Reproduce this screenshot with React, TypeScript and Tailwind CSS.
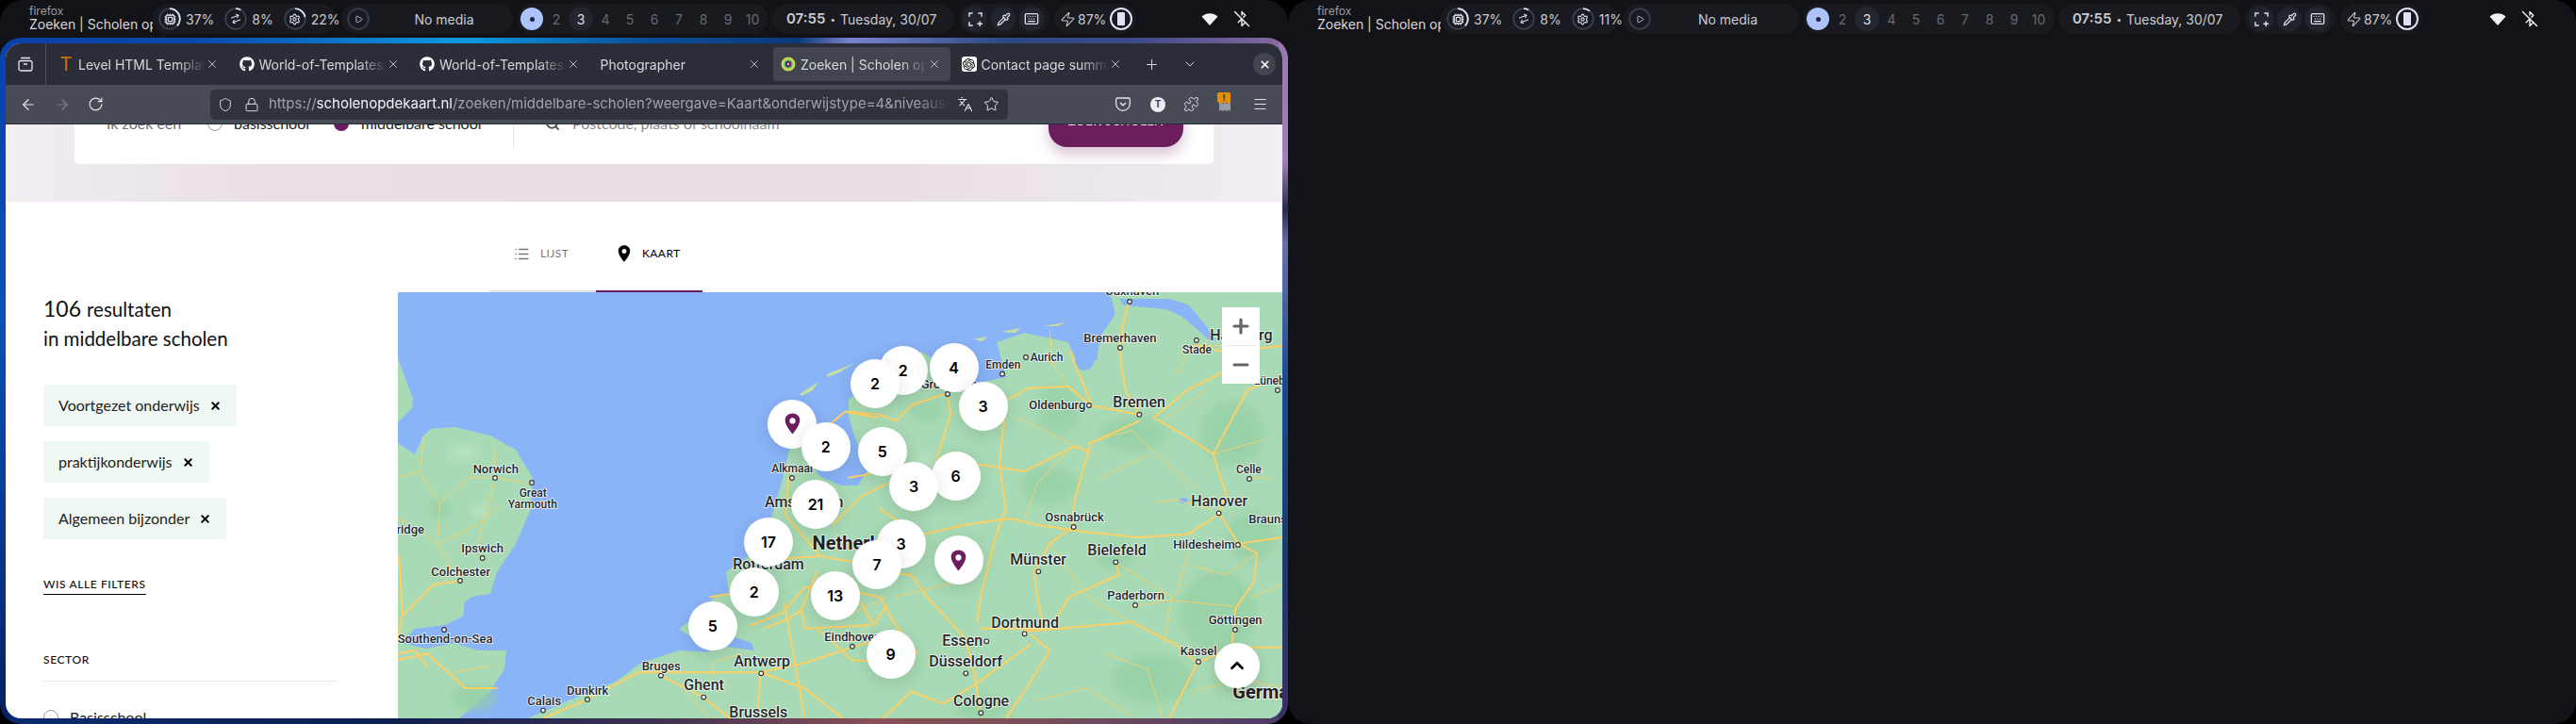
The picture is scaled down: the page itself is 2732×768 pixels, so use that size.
import type { ReactNode } from "react";
import {
  ArrowLeft,
  ArrowRight,
  ArrowRightLeft,
  BluetoothOff,
  ChevronDown,
  ChevronUp,
  Cpu,
  Keyboard,
  Languages,
  List,
  Lock,
  Menu,
  Minus,
  Pipette,
  Play,
  Plus,
  Puzzle,
  RotateCw,
  Search,
  Settings,
  Shield,
  Star,
  X,
  Zap,
} from "lucide-react";
import { FaGithub } from "react-icons/fa";
import { IoLocationSharp } from "react-icons/io5";
import { SiOpenai } from "react-icons/si";

const Ring = ({ pct, children }: { pct: number; children: ReactNode }) => {
  return (
    <div className="relative flex h-6 w-6 items-center justify-center text-[#dfe3f0]">
      <svg viewBox="0 0 24 24" className="absolute inset-0 -rotate-90">
        <circle cx="12" cy="12" r="10.8" fill="none" stroke="#3a3f4e" strokeWidth="1.8" />
        <circle
          cx="12"
          cy="12"
          r="10.8"
          fill="none"
          stroke="#dfe3f0"
          strokeWidth="1.8"
          pathLength={100}
          strokeDasharray={`${pct} 100`}
        />
      </svg>
      {children}
    </div>
  );
};

const TopBar = ({
  gpu,
  statsWidth,
  mediaWidth,
}: {
  gpu: number;
  statsWidth: string;
  mediaWidth: string;
}) => {
  return (
    <div className="flex h-10 shrink-0 items-center font-['Inter',sans-serif] text-[14px] text-[#c9cbd1]">
      <div className="w-[162px] shrink-0 overflow-hidden whitespace-nowrap pl-[31px]">
        <div className="text-[12px] leading-[12px] text-[#9a9ca3]">firefox</div>
        <div className="text-[14px] leading-[16px] text-[#d9d9dd]">Zoeken | Scholen op de kaart</div>
      </div>

      <div className={`flex h-8 items-center gap-[11px] rounded-2xl bg-[#181a20] pl-[6px] ${statsWidth}`}>
        <div className="flex items-center gap-[5px]">
          <Ring pct={37}>
            <Cpu size={13} strokeWidth={2.4} />
          </Ring>
          <span>37%</span>
        </div>
        <div className="flex items-center gap-[5px]">
          <Ring pct={8}>
            <ArrowRightLeft size={12} className="-rotate-[20deg]" />
          </Ring>
          <span>8%</span>
        </div>
        <div className="flex items-center gap-[5px]">
          <Ring pct={gpu}>
            <Settings size={13} />
          </Ring>
          <span>{gpu}%</span>
        </div>
      </div>

      <div className={`ml-[5px] flex h-8 items-center rounded-2xl bg-[#181a20] pl-[6px] ${mediaWidth}`}>
        <Ring pct={0}>
          <Play size={9} />
        </Ring>
        <span className="flex-1 pl-[6px] text-center">No media</span>
      </div>

      <div className="ml-[5px] flex h-8 w-[266px] items-center rounded-2xl bg-[#181a20] pl-[2px] text-[#666970]">
        <div className="flex h-[26px] w-[26px] items-center justify-center">
          <div className="flex h-[24px] w-[24px] items-center justify-center rounded-full bg-[#adc3fb]">
            <div className="h-[5px] w-[5px] rounded-full bg-[#1c2440]" />
          </div>
        </div>
        <div className="flex h-[26px] w-[26px] items-center justify-center">2</div>
        <div className="flex h-[26px] w-[26px] items-center justify-center rounded-full bg-[#24262d] text-[#dcdee3]">
          3
        </div>
        {[4, 5, 6, 7, 8, 9, 10].map((n) => (
          <div key={n} className="flex h-[26px] w-[26px] items-center justify-center">
            {n}
          </div>
        ))}
      </div>

      <div className="ml-[4px] flex h-8 w-[193px] items-center gap-[5px] rounded-2xl bg-[#181a20] pl-[15px]">
        <span className="text-[15px] font-semibold">07:55</span>
        <span className="text-[10px]">•</span>
        <span>Tuesday, 30/07</span>
      </div>

      <div className="ml-[5px] flex h-8 w-[96px] items-center gap-[4px] rounded-2xl bg-[#181a20] pl-[4px]">
        <div className="flex h-[26px] w-[26px] items-center justify-center rounded-full bg-[#22242b]">
          <svg width="15" height="15" viewBox="0 0 16 16" fill="none" stroke="#dfe1e6" strokeWidth="1.5">
            <path d="M1 5V1h4M11 1h4v4M1 11v4h4M13 10v6M10 13h6" />
          </svg>
        </div>
        <div className="flex h-[26px] w-[26px] items-center justify-center rounded-full bg-[#22242b]">
          <Pipette size={15} className="text-[#dfe1e6]" />
        </div>
        <div className="flex h-[26px] w-[26px] items-center justify-center rounded-full bg-[#22242b]">
          <Keyboard size={16} className="text-[#dfe1e6]" />
        </div>
      </div>

      <div className="ml-[5px] flex h-8 w-[87px] items-center rounded-2xl bg-[#181a20] pl-[6px]">
        <Zap size={17} strokeWidth={1.5} />
        <span className="ml-[2px]">87%</span>
        <div className="relative ml-[4px] flex h-6 w-6 items-center justify-center rounded-full border-2 border-[#dfe3f5]">
          <div className="h-[14px] w-[8px] rounded-[1px] bg-[#dfe3f5]" />
        </div>
      </div>

      <div className="ml-auto flex items-center gap-[16px] pr-[40px] text-[#e8e8ee]">
        <svg width="18" height="14" viewBox="0 0 18 14">
          <path d="M9 14 0.5 4.5C5 0 13 0 17.5 4.5Z" fill="#f0f0f4" />
        </svg>
        <BluetoothOff size={18} />
      </div>
    </div>
  );
};

const tabs: { icon?: ReactNode; title: string; active?: boolean }[] = [
  {
    icon: <span className="text-[20px] font-normal leading-none text-[#d2690a]">T</span>,
    title: "Level HTML Template",
  },
  { icon: <FaGithub size={16} className="text-white" />, title: "World-of-Templates/level" },
  { icon: <FaGithub size={16} className="text-white" />, title: "World-of-Templates/level" },
  { title: "Photographer" },
  {
    icon: (
      <svg width="16" height="16" viewBox="0 0 16 16">
        <circle cx="8" cy="8" r="7.5" fill="#c9d84c" />
        <circle cx="8" cy="8" r="4.5" fill="#3aa58a" />
        <circle cx="8" cy="8" r="3" fill="#6b1d5e" />
        <circle cx="8" cy="8" r="1" fill="#ffffff" />
      </svg>
    ),
    title: "Zoeken | Scholen op de kaart",
    active: true,
  },
  {
    icon: (
      <div className="flex h-4 w-4 items-center justify-center rounded-[3px] bg-white">
        <SiOpenai size={13} className="text-black" />
      </div>
    ),
    title: "Contact page summary",
  },
];

const TabStrip = () => {
  return (
    <div className="flex h-[44px] shrink-0 items-center bg-[#2b2e38] font-['Inter',sans-serif] text-[14px] text-[#d6d8de]">
      <div className="flex h-full w-[43px] items-center justify-center border-r border-[#4a4d57]">
        <svg width="16" height="16" viewBox="0 0 16 16" fill="none" stroke="#e4e6f0" strokeWidth="1.3">
          <path d="M3 1.5h10" />
          <rect x="1" y="4.5" width="14" height="10.5" rx="2" />
          <path d="M6 8h4" />
        </svg>
      </div>
      <div className="ml-[5px] flex gap-[3.5px]">
        {tabs.map((t, i) => (
          <div
            key={i}
            className={`flex h-9 w-[188px] items-center rounded-[4px] pl-[8px] pr-[10px] ${t.active ? "bg-[#42454f]" : ""}`}
          >
            {t.icon && <div className="mr-[5px] flex w-4 shrink-0 justify-center">{t.icon}</div>}
            <div className="min-w-0 flex-1 overflow-hidden whitespace-nowrap [mask-image:linear-gradient(90deg,#000_78%,transparent_100%)]">
              {t.title}
            </div>
            <X size={14} strokeWidth={1.4} className="shrink-0" />
          </div>
        ))}
      </div>
      <Plus size={17} strokeWidth={1.5} className="ml-[13px]" />
      <ChevronDown size={16} strokeWidth={1.5} className="ml-[24px]" />
      <div className="ml-auto mr-[7px] flex h-6 w-6 items-center justify-center rounded-full bg-[#42454f]">
        <X size={13} strokeWidth={3} className="text-white" />
      </div>
    </div>
  );
};

const NavBar = () => {
  return (
    <div className="flex h-[42px] shrink-0 items-center border-b border-[#2b2d36] bg-[#474b55] font-['Inter',sans-serif] text-[#e4e6ec]">
      <ArrowLeft size={18} strokeWidth={1.6} className="ml-[15px]" />
      <ArrowRight size={18} strokeWidth={1.6} className="ml-[18px] text-[#7d808a]" />
      <RotateCw size={17} strokeWidth={1.6} className="ml-[18px]" />

      <div className="ml-[113px] flex h-8 w-[846px] items-center rounded-[5px] bg-[#30333c] pl-[8px] pr-[8px]">
        <Shield size={16} strokeWidth={1.4} />
        <Lock size={16} strokeWidth={1.4} className="ml-[12px]" />
        <div className="ml-[10px] w-[722px] overflow-hidden whitespace-nowrap text-[15px] text-[#a0a2aa] [mask-image:linear-gradient(90deg,#000_95%,transparent_100%)]">
          https://<span className="text-[#f2f2f5]">scholenopdekaart.nl</span>
          /zoeken/middelbare-scholen?weergave=Kaart&onderwijstype=4&niveaus=praktijkonderwijs
        </div>
        <Languages size={17} strokeWidth={1.5} className="ml-[8px]" />
        <Star size={17} strokeWidth={1.4} className="ml-[11px]" />
      </div>

      <svg width="16" height="15" viewBox="0 0 16 15" fill="none" stroke="#e4e6ec" strokeWidth="1.3" className="ml-[114px]">
        <path d="M2 1h12a1.3 1.3 0 0 1 1.3 1.3V7a7.3 7.3 0 0 1-14.6 0V2.300A1.300 1.300 0 0 1 2 1Z" />
        <path d="m5 6 3 2.800L11 6" strokeWidth="1.5" />
      </svg>
      <div className="ml-[21px] flex h-4 w-4 items-center justify-center rounded-full bg-[#eceef2] text-[10px] font-bold text-[#3b3e48]">
        T
      </div>
      <Puzzle size={17} strokeWidth={1.4} className="ml-[19px]" />
      <div className="relative ml-[19px] h-4 w-4">
        <svg width="14" height="16" viewBox="0 0 14 16" className="ml-[1px]">
          <path d="M7 0a6 6 0 0 1 6 6v9l-2-1.500L9 15l-2-1.500L5 15l-2-1.500L1 15V6a6 6 0 0 1 6-6Z" fill="#9a9ca2" />
          <circle cx="5" cy="6" r="1" fill="#474b55" />
          <circle cx="9" cy="6" r="1" fill="#474b55" />
        </svg>
        <div className="absolute -top-[5px] left-0 flex h-[11px] w-[14px] items-center justify-center rounded-[2px] bg-[#e58e00] text-[9px] font-bold leading-none text-[#2b2d36]">
          !
        </div>
      </div>
      <Menu size={17} strokeWidth={1.4} className="ml-[21px]" />
    </div>
  );
};

const SearchStrip = () => {
  return (
    <div className="flex h-[82px] shrink-0 flex-col justify-end overflow-hidden bg-[linear-gradient(90deg,#f2eef2_0%,#eadfe8_20%,#e9dee7_70%,#f2eef3_100%)] pb-[40px] pl-[73px] pr-[73px]">
      <div className="flex h-[110px] shrink-0 items-end rounded-[5px] bg-white pb-[16px] pl-[34px] pr-[32px] font-['Lato',sans-serif] text-[16px]">
        <div className="flex h-[54px] w-full items-center">
          <span className="w-[107px] text-[#6f6f6f]">Ik zoek een</span>
          <span className="h-4 w-4 rounded-full border border-[#999]" />
          <span className="ml-[12px] w-[106px] text-[#222]">basisschool</span>
          <span className="h-4 w-4 rounded-full bg-[#6b1d5e]" />
          <span className="ml-[13px] w-[161px] text-[#222]">middelbare school</span>
          <span className="h-full w-px bg-[#eee4ea]" />
          <Search size={16} strokeWidth={3} className="ml-[33px] text-[#555]" />
          <span className="ml-[13px] text-[#8a8a8a]">Postcode, plaats of schoolnaam</span>
          <button className="ml-auto -mt-[4px] flex h-[54px] w-[143px] items-center justify-center rounded-[20px] bg-[#6b1d5e] text-[13px] font-medium tracking-wide text-white shadow-[0_8px_14px_rgba(107,29,94,0.25)]">
            ZOEK SCHOLEN
          </button>
        </div>
      </div>
    </div>
  );
};

const Chip = ({ label }: { label: string }) => {
  return (
    <div className="flex h-11 w-fit items-center gap-[10px] rounded-[4px] bg-[#eff8f3] pl-[16px] pr-[16px] text-[16px] text-[#222]">
      <span>{label}</span>
      <X size={13} strokeWidth={3.5} className="text-black" />
    </div>
  );
};

const Sidebar = () => {
  return (
    <div className="w-[416px] shrink-0 pl-[40px] font-['Lato',sans-serif] text-[#111]">
      <div className="flex h-8 items-baseline gap-[6px] text-[20.5px]">
        <span className="text-[23px]">106</span>
        <span>resultaten</span>
      </div>
      <div className="mt-[1px] h-8 text-[20.5px] leading-8">in middelbare scholen</div>
      <div className="mt-[33px] flex flex-col gap-4">
        <Chip label="Voortgezet onderwijs" />
        <Chip label="praktijkonderwijs" />
        <Chip label="Algemeen bijzonder" />
      </div>
      <div className="mt-[40px] w-fit border-b border-black pb-[2px] text-[12px] font-medium leading-[16px] tracking-[0.6px]">
        WIS ALLE FILTERS
      </div>
      <div className="mt-[61px] w-[312px] border-b border-[#eee6ea] pb-[14px] text-[12px] font-medium leading-[16px] tracking-[0.6px]">
        SECTOR
      </div>
      <div className="mt-[26px] flex items-center gap-[12px] text-[16px] text-[#222]">
        <span className="h-4 w-4 rounded-full border border-[#999]" />
        <span>Basisschool</span>
      </div>
    </div>
  );
};

// map labels: x, y (baseline), name, size
const labelsWest: [number, number, string, number][] = [
  [245, 605, "Norwich", 13],
  [392, 680, "Great", 12],
  [356, 716, "Yarmouth", 12],
  [208, 858, "Ipswich", 13],
  [112, 932, "Colchester", 13],
  [5, 1147, "Southend-on-Sea", 13],
  [418, 1343, "Calais", 13],
  [543, 1310, "Dunkirk", 13],
  [782, 1232, "Bruges", 13],
  [916, 1297, "Ghent", 16],
  [1075, 1222, "Antwerp", 16],
  [1060, 1382, "Brussels", 16],
  [1363, 1140, "Eindhoven", 13],
  [1072, 912, "Rotterdam", 16],
  [1195, 603, "Alkmaar", 12],
  [1173, 713, "Amsterdam", 16],
];

const labelsEast: [number, number, string, number][] = [
  [817, 40, "Cuxhaven", 13],
  [748, 190, "Bremerhaven", 13],
  [1150, 182, "Hamburg", 16],
  [1062, 224, "Stade", 12],
  [436, 273, "Emden", 12],
  [578, 249, "Aurich", 12],
  [574, 403, "Oldenburg", 13],
  [841, 397, "Bremen", 16],
  [1290, 323, "Lüneburg", 12],
  [230, 335, "Groningen", 13],
  [1233, 605, "Celle", 12],
  [1090, 712, "Hanover", 16],
  [1273, 765, "Braunschweig", 13],
  [625, 760, "Osnabrück", 13],
  [760, 868, "Bielefeld", 16],
  [1033, 847, "Hildesheim", 13],
  [514, 898, "Münster", 16],
  [823, 1008, "Paderborn", 13],
  [454, 1097, "Dortmund", 16],
  [298, 1155, "Essen", 16],
  [256, 1220, "Düsseldorf", 16],
  [333, 1348, "Cologne", 16],
  [1145, 1087, "Göttingen", 13],
  [1055, 1185, "Kassel", 13],
];

const dotsWest = [
  [315, 621], [432, 636], [275, 876], [204, 948], [153, 1104], [468, 1361],
  [609, 1326], [843, 1250], [979, 1319], [1162, 1243], [1260, 621], [1452, 1157],
];

const dotsEast = [
  [894, 60], [864, 207], [1107, 183], [564, 237], [489, 290], [315, 354], [765, 390],
  [925, 419], [1365, 342], [1275, 624], [1178, 733], [716, 777], [850, 889], [1239, 834],
  [604, 919], [912, 1026], [560, 1117], [439, 1141], [373, 1243], [421, 1369], [1230, 1104], [1113, 1206],
];

const roadsWest = [
  "M6 1130 20 1060 120 960 204 948",
  "M10 870 20 1060",
  "M6 1200 100 1180 220 1290 320 1290",
  "M6 1180 60 1170 100 1220",
  "M770 1240 600 1330 470 1385",
  "M770 1240 1000 1240 1160 1240 1300 1210 1450 1160 1560 1130",
  "M840 1250 980 1320 1060 1385",
  "M1160 1240 1150 1385",
  "M1160 1240 1300 1290 1420 1385",
  "M1235 1020 1250 1100 1300 1385",
  "M1340 920 1290 1040 1300 1100 1510 1090",
  "M1170 1100 1250 1070 1290 1040",
  "M1250 620 1240 740 1350 870 1520 900",
  "M1200 880 1350 870",
  "M1380 450 1430 410 1530 430",
  "M1390 770 1480 680 1560 640",
  "M1130 1090 1230 1050 1300 970 1400 960",
  "M1000 1000 1060 990 1130 1000",
  "M1340 1100 1450 1200 1560 1210",
  "M1480 1020 1520 1090 1560 1030",
];

const roadsEast = [
  "M925 420 770 390 700 330 570 335 510 370",
  "M925 440 770 510 720 690 710 770",
  "M970 430 1080 340 1190 285",
  "M980 435 1060 480 1160 545 1200 670 1180 735",
  "M705 220 770 380",
  "M890 60 860 200 880 340 925 420",
  "M1180 735 1080 800 920 810 730 790 600 770 510 750 370 770 240 800",
  "M710 780 640 830 590 920 600 1000 620 1090",
  "M850 890 860 930 700 1000 660 1070 560 1110",
  "M500 370 480 580 500 720 470 800 420 1000 410 1080",
  "M560 1110 900 1080 1040 1150 1110 1210 1220 1160 1380 1160",
  "M1240 830 1300 860 1290 950 1230 1040 1220 1150",
  "M315 350 200 390 150 440 100 420 0 410",
  "M315 350 325 420 280 560",
  "M415 578 560 600 720 520 770 540",
  "M420 1100 700 1100",
  "M420 1370 400 1240 370 1130",
  "M580 1150 400 1280 300 1340 200 1300 110 1385",
  "M0 980 100 1000 150 1090 220 1180 120 1180",
  "M370 1130 250 1000 200 930 160 925",
  "M1160 545 1270 340 1380 300",
  "M1180 735 1240 830 1380 810",
  "M1110 1210 1020 1385",
  "M580 1120 640 1170",
  "M200 1180 60 1190",
  "M0 620 60 610 130 560",
  "M1380 200 1200 220 1100 200",
  "M500 1385 560 1300 640 1170",
  "M100 720 160 760 240 800",
];

const thinRoads = [
  "M90 490 75 600 140 700 230 620 315 620 430 640",
  "M315 620 280 750 260 840 275 876",
  "M75 600 6 620",
  "M140 700 130 830 204 948",
  "M330 710 260 770 130 830",
  "M1360 1020 1440 1060 1560 1000",
  "M1100 1180 1005 1210 1010 1250",
  "M6 750 75 790 130 830",
  "M310 500 315 620",
  "M180 1240 300 1220",
  "M920 1300 1000 1385",
];

const thinRoadsEast = [
  "M700 330 650 260 640 150",
  "M1040 1000 1100 800",
  "M760 510 900 470 1040 600 1100 650",
  "M800 620 950 550",
  "M560 750 600 640 710 520",
  "M850 890 1030 1000 1000 1150",
  "M1300 860 1200 930 1100 900",
  "M1000 440 1140 340",
  "M1280 200 1100 200 1030 300",
  "M640 830 760 1000 900 1080",
  "M900 1030 1020 1010 1230 1030",
  "M150 1000 350 950 400 850",
  "M1340 620 1280 620",
  "M600 1330 760 1290 900 1380",
  "M1150 720 1040 690 980 700",
  "M540 430 620 470 720 520",
  "M1100 1300 1250 1260 1380 1290",
  "M820 1180 950 1230 1000 1385",
  "M1320 500 1160 545",
  "M1280 1000 1380 960",
];

type Marker = { x: number; y: number; label?: string };

const markers: Marker[] = [
  { x: 1260 / 3 - 2, y: 449 / 3 - 10 },
  { x: 1367 / 3 - 2, y: 522 / 3 - 10, label: "2" },
  { x: 478 + 173 / 3, y: 279 / 3 - 10, label: "2" },
  { x: 478 + 84 / 3, y: 320 / 3 - 10, label: "2" },
  { x: 478 + 335 / 3, y: 271 / 3 - 10, label: "4" },
  { x: 478 + 428 / 3, y: 393 / 3 - 10, label: "3" },
  { x: 478 + 107 / 3, y: 537 / 3 - 10, label: "5" },
  { x: 478 + 341 / 3, y: 615 / 3 - 10, label: "6" },
  { x: 478 + 207 / 3, y: 648 / 3 - 10, label: "3" },
  { x: 1335 / 3 - 2, y: 705 / 3 - 10, label: "21" },
  { x: 1185 / 3 - 2, y: 825 / 3 - 10, label: "17" },
  { x: 478 + 167 / 3, y: 831 / 3 - 10, label: "3" },
  { x: 478 + 350 / 3, y: 882 / 3 - 10 },
  { x: 478 + 90 / 3, y: 897 / 3 - 10, label: "7" },
  { x: 1139 / 3 - 2, y: 985 / 3 - 10, label: "2" },
  { x: 1397 / 3 - 2, y: 997 / 3 - 10, label: "13" },
  { x: 1007 / 3 - 2, y: 1092 / 3 - 10, label: "5" },
  { x: 478 + 134 / 3, y: 1182 / 3 - 10, label: "9" },
];

const CityLabel = ({ x, y, name, size }: { x: number; y: number; name: string; size: number }) => {
  return (
    <text
      x={x}
      y={y}
      fontSize={size * 3}
      className="fill-[#26282c] stroke-white/80 font-['Roboto',sans-serif] font-medium [paint-order:stroke] [stroke-width:5px]"
    >
      {name}
    </text>
  );
};

const MapPanel = () => {
  return (
    <div className="relative h-full w-[938px] overflow-hidden bg-[#8ab4f8]">
      <svg viewBox="0 0 938 452" className="absolute inset-0 h-full w-full">
        <defs>
          <filter id="soft" x="-20%" y="-20%" width="140%" height="140%">
            <feGaussianBlur stdDeviation="5" />
          </filter>
        </defs>
        {/* land */}
        <path
          d="M0 70 16 113 15 123 0 138ZM0 160 18 172 27 152 35 145 60 143 98 152 125 167 143 197 141 230 125 267 105 297 98 320 78 323 70 330 70 343 50 353 18 357 5 372 30 378 60 372 85 380 115 380 113 400 98 423 65 452 0 452Z"
          fill="#a8dab5"
        />
        <path
          d="M138 452 181 433 231 413 258 393 298 380 331 382 320 372 298 357 318 343 336 323 351 320 348 297 375 277 391 253 398 233 408 197 415 167 428 150 436 175 447 195 470 205 488 205 497 190 494 175 483 150 478 130 478 113 508 100 555 63 575 75 611 97 645 90 635 53 665 43 711 53 722 78 741 72 745 47 761 23 755 0 938 0 938 452Z"
          fill="#a8dab5"
        />
        {/* forest patches */}
        <g fill="#94cfa4" filter="url(#soft)" opacity="0.7">
          <ellipse cx="690" cy="205" rx="30" ry="20" />
          <ellipse cx="780" cy="150" rx="36" ry="18" />
          <ellipse cx="885" cy="150" rx="34" ry="34" />
          <ellipse cx="700" cy="125" rx="22" ry="26" />
          <ellipse cx="870" cy="340" rx="40" ry="44" />
          <ellipse cx="800" cy="410" rx="44" ry="26" />
          <ellipse cx="905" cy="260" rx="26" ry="26" />
          <ellipse cx="80" cy="430" rx="24" ry="14" />
          <ellipse cx="45" cy="230" rx="12" ry="10" />
          <ellipse cx="620" cy="440" rx="28" ry="14" />
          <ellipse cx="560" cy="125" rx="18" ry="12" />
          <ellipse cx="760" cy="280" rx="20" ry="14" />
        </g>
        <g fill="#c1e6cb" filter="url(#soft)" opacity="0.8">
          <ellipse cx="70" cy="170" rx="16" ry="6" />
          <ellipse cx="88" cy="232" rx="10" ry="6" />
          <ellipse cx="560" cy="180" rx="14" ry="8" />
        </g>
        {/* water on land */}
        <g fill="#8ab4f8">
          <path d="M765 7 818 7 838 13 855 33 868 52 862 52 832 26 815 18 770 14Z" />
          <ellipse cx="728" cy="74" rx="10" ry="9" />
          <path d="M345 362 375 372 378 380 340 375Z" />
          <path d="M330 335 350 332 352 342 335 345Z" />
          <ellipse cx="833" cy="221" rx="5" ry="3" />
        </g>
        {/* islands */}
        <g fill="#c9dfa0">
          <path d="M455 87 485 75 470 84 456 90Z" />
          <path d="M426 108 446 95 440 104 428 110Z" />
          <path d="M610 50 625 47 620 52Z" />
          <path d="M640 42 660 38 655 43Z" />
          <path d="M685 36 708 32 700 36Z" />
        </g>
        {/* roads */}
        <g fill="none" stroke="#fdd064" strokeLinejoin="round" strokeLinecap="round">
          <g transform="translate(-2 -10) scale(0.3333)">
            {roadsWest.map((d, i) => (
              <path key={i} d={d} strokeWidth={6} />
            ))}
            {thinRoads.map((d, i) => (
              <path key={i} d={d} strokeWidth={3} opacity={0.9} />
            ))}
          </g>
          <g transform="translate(478 -10) scale(0.3333)">
            {roadsEast.map((d, i) => (
              <path key={i} d={d} strokeWidth={6} />
            ))}
            {thinRoadsEast.map((d, i) => (
              <path key={i} d={d} strokeWidth={3} opacity={0.9} />
            ))}
          </g>
        </g>
        {/* city dots and labels */}
        <g transform="translate(-2 -10) scale(0.3333)">
          {dotsWest.map(([x, y], i) => (
            <circle key={i} cx={x} cy={y} r={7} fill="#fff" stroke="#333" strokeWidth={3.500} />
          ))}
          {labelsWest.map(([x, y, name, size]) => (
            <CityLabel key={name} x={x} y={y} name={name} size={size} />
          ))}
          <text x={90} y={797} fontSize={39} textAnchor="end" className="fill-[#26282c] stroke-white/80 font-['Roboto',sans-serif] font-medium [paint-order:stroke] [stroke-width:5px]">
            Cambridge
          </text>
          <text x={1325} y={850} fontSize={60} className="fill-[#1f2125] stroke-white/80 font-['Roboto',sans-serif] font-bold [paint-order:stroke] [stroke-width:5px]">
            Netherlands
          </text>
        </g>
        <g transform="translate(478 -10) scale(0.3333)">
          {dotsEast.map(([x, y], i) => (
            <circle key={i} cx={x} cy={y} r={7} fill="#fff" stroke="#333" strokeWidth={3.500} />
          ))}
          {labelsEast.map(([x, y, name, size]) => (
            <CityLabel key={name} x={x} y={y} name={name} size={size} />
          ))}
          <text x={1222} y={1323} fontSize={60} className="fill-[#1f2125] stroke-white/80 font-['Roboto',sans-serif] font-bold [paint-order:stroke] [stroke-width:5px]">
            Germany
          </text>
        </g>
      </svg>

      {markers.map((m, i) => (
        <div
          key={i}
          className="absolute flex h-[52px] w-[52px] -translate-x-1/2 -translate-y-1/2 items-center justify-center rounded-full bg-white font-['Inter',sans-serif] text-[16px] font-semibold text-black shadow-[0_4px_18px_rgba(0,0,0,0.12)]"
          style={{ left: m.x, top: m.y }}
        >
          {m.label ?? <IoLocationSharp size={25} className="text-[#6b1d5e]" />}
        </div>
      ))}

      <div className="absolute left-[874px] top-[16px] flex h-[81px] w-10 flex-col items-center bg-white text-[#666]">
        <div className="flex h-10 w-full items-center justify-center">
          <Plus size={24} strokeWidth={3.200} />
        </div>
        <div className="h-px w-[30px] bg-[#e6e6e6]" />
        <div className="flex h-10 w-full items-center justify-center">
          <Minus size={24} strokeWidth={3.200} />
        </div>
      </div>

      <div className="absolute left-[866px] top-[372px] flex h-12 w-12 items-center justify-center rounded-full bg-white text-black shadow-[0_6px_16px_rgba(0,0,0,0.15)]">
        <ChevronUp size={22} strokeWidth={3} />
      </div>
    </div>
  );
};

const ViewTabs = () => {
  return (
    <div className="flex h-[96px] shrink-0 pl-[513px] font-['Lato',sans-serif] text-[12px] tracking-[0.4px]">
      <div className="flex w-[113px] items-center gap-[11px] border-b-2 border-[#e2e2e2] pl-[26px] pt-[16px] text-[#777]">
        <List size={17} strokeWidth={2.200} />
        <span>LIJST</span>
      </div>
      <div className="flex w-[113px] items-center gap-[9px] border-b-2 border-[#6b1d5e] pl-[20px] pt-[16px] text-black">
        <IoLocationSharp size={20} />
        <span>KAART</span>
      </div>
    </div>
  );
};

const BrowserWindow = () => {
  return (
    <div className="flex h-[728px] shrink-0 rounded-[22px] p-[6px] [background:linear-gradient(180deg,#0a40b0_0%,#0a50b8_40%,#0a3a90_70%,#052060_100%)_left/10px_100%_no-repeat,linear-gradient(180deg,#9a78b0_0%,#a080b8_18%,#2a2a50_25%,#6a70b0_30%,#1a4a90_50%,#1a3a70_75%,#3d2f60_100%)_right/10px_100%_no-repeat,linear-gradient(90deg,#0a3fa8_0%,#0a4aa8_15%,#0f9ae0_36%,#0a4f9a_50%,#0a3a7a_62%,#7a82d0_66%,#2a4a80_78%,#3d4a88_88%,#8a6aa0_100%)_top/100%_10px_no-repeat,linear-gradient(90deg,#0a2a70_0%,#0d1f50_30%,#3a3050_50%,#8a5058_68%,#7a5058_80%,#4a3a68_100%)_bottom/100%_10px_no-repeat]">
      <div className="flex min-w-0 flex-1 flex-col overflow-hidden rounded-[16px] bg-white">
        <TabStrip />
        <NavBar />
        <SearchStrip />
        <ViewTabs />
        <div className="flex min-h-0 flex-1">
          <Sidebar />
          <MapPanel />
        </div>
      </div>
    </div>
  );
};

export default function App() {
  return (
    <div className="flex h-[768px] w-[2732px] overflow-hidden bg-black">
      <div className="flex h-full w-[1366px] shrink-0 flex-col rounded-[24px] bg-[#121318]">
        <TopBar gpu={22} statsWidth="w-[195px]" mediaWidth="w-[182px]" />
        <BrowserWindow />
      </div>
      <div className="flex h-full w-[1366px] shrink-0 flex-col rounded-[24px] bg-[#121318]">
        <TopBar gpu={11} statsWidth="w-[188px]" mediaWidth="w-[187px]" />
      </div>
    </div>
  );
}
